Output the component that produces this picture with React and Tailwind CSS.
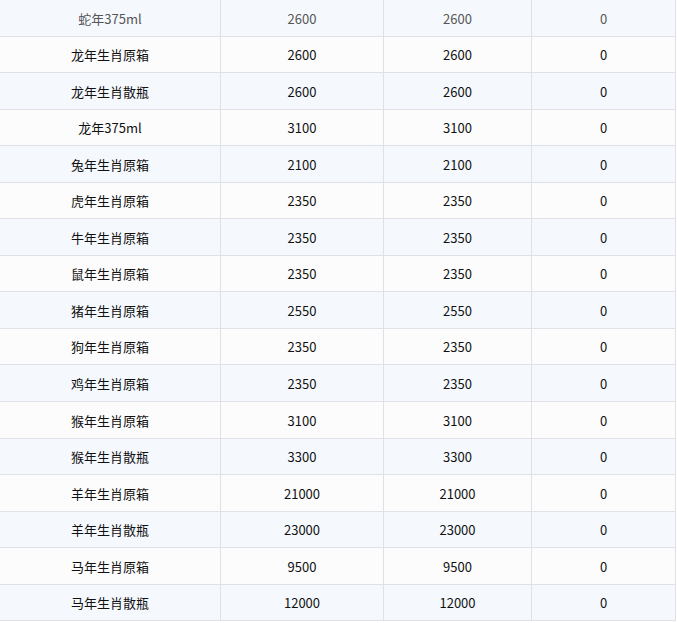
import React from 'react';

const rows = [
    ['蛇年375ml', 2600, 2600, 0],
    ['龙年生肖原箱', 2600, 2600, 0],
    ['龙年生肖散瓶', 2600, 2600, 0],
    ['龙年375ml', 3100, 3100, 0],
    ['兔年生肖原箱', 2100, 2100, 0],
    ['虎年生肖原箱', 2350, 2350, 0],
    ['牛年生肖原箱', 2350, 2350, 0],
    ['鼠年生肖原箱', 2350, 2350, 0],
    ['猪年生肖原箱', 2550, 2550, 0],
    ['狗年生肖原箱', 2350, 2350, 0],
    ['鸡年生肖原箱', 2350, 2350, 0],
    ['猴年生肖原箱', 3100, 3100, 0],
    ['猴年生肖散瓶', 3300, 3300, 0],
    ['羊年生肖原箱', 21000, 21000, 0],
    ['羊年生肖散瓶', 23000, 23000, 0],
    ['马年生肖原箱', 9500, 9500, 0],
    ['马年生肖散瓶', 12000, 12000, 0],
];

function App() {
    return (
        <div
            className="w-[676px] bg-white text-[13px] text-[#111]"
            style={{ fontFamily: '"Noto Sans CJK SC", "Noto Sans", sans-serif' }}
        >
            {rows.map((row, index) => (
                <div
                    key={row[0]}
                    className={`flex h-[36.56px] border-b border-[#dfe1e6] ${
                        index % 2 === 0 ? 'bg-[#f5f9fe]' : 'bg-[#fcfcfc]'
                    } ${index === 0 ? 'text-[#555]' : ''}`}
                >
                    <div className="w-[221px] pt-px flex items-center justify-center border-r border-[#dfe1e6]">
                        {row[0]}
                    </div>
                    <div className="w-[163px] pt-px flex items-center justify-center border-r border-[#dfe1e6]">
                        {row[1]}
                    </div>
                    <div className="w-[148px] pt-px flex items-center justify-center border-r border-[#dfe1e6]">
                        {row[2]}
                    </div>
                    <div className="w-[144px] pt-px flex items-center justify-center border-r border-[#dfe1e6]">
                        {row[3]}
                    </div>
                </div>
            ))}
        </div>
    );
}

export default App;
